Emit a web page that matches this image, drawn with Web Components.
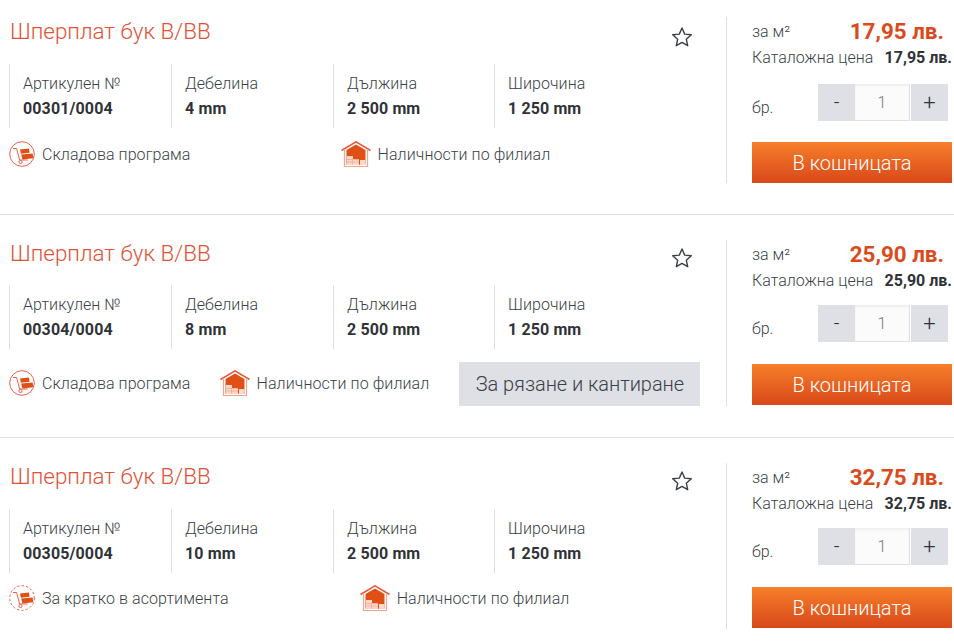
<!DOCTYPE html>
<html lang="bg">
<head>
<meta charset="utf-8">
<title>Шперплат</title>
<style>
html, body { margin: 0; background: #fff; }
body { font-family: Roboto, "Liberation Sans", sans-serif; color: #3a3f47; overflow: hidden; }
</style>
</head>
<body>
<product-list>
  <product-row code="00301/0004" thickness="4 mm" price="17,95 лв." stock="Складова програма" gap="150" first></product-row>
  <product-row code="00304/0004" thickness="8 mm" price="25,90 лв." stock="Складова програма" gap="29" cut></product-row>
  <product-row code="00305/0004" thickness="10 mm" price="32,75 лв." stock="За кратко в асортимента" gap="131" soon></product-row>
</product-list>

<script>
// icons
const cartIcon = (dashed) => `
<svg width="26" height="26" viewBox="0 0 26 26" fill="none">
  <circle cx="13" cy="13" r="12.3" stroke="#e8604a" stroke-width="1" ${dashed ? 'stroke-dasharray="2.4 2"' : ''}/>
  <path d="M4 7.5h3.6l3 11.5h8" stroke="#e8604a" stroke-width="1"/>
  <circle cx="11.5" cy="21" r="1.6" stroke="#e8604a" stroke-width="1"/>
  <path d="M11 8.6l9-1 .5 4.2-8.6 1z" fill="#e04f16"/>
  <path d="M12.2 13.6l11.4-1 .6 4.6-10.8 1.2z" fill="#e04f16"/>
</svg>`;

const houseIcon = `
<svg width="30" height="26" viewBox="0 0 30 26" fill="none">
  <path d="M.5 9.5L15 .8l14.5 8.7" stroke="#e8583a" stroke-width="1.5"/>
  <path d="M3.5 8v17.5h23V8" stroke="#f2a493" stroke-width="1.2"/>
  <path d="M5.5 23.8V9L15 3.4 24.5 9v14.8z" fill="#e04f16"/>
  <path d="M6 15h6v3h6v6H6z" fill="#fbd9c8"/>
  <path d="M6 18.5h12M11.5 18.5V24M6 21h12" stroke="#f2a493" stroke-width=".7"/>
  <path d="M19 19h5.5v5H19z" fill="#fbd9c8"/>
</svg>`;

const starIcon = `
<svg width="22" height="22" viewBox="0 0 22 22" fill="none">
  <path d="M11 2l2.7 6.1 6.6.7-5 4.4 1.4 6.5L11 16.4l-5.7 3.3 1.4-6.5-5-4.4 6.6-.7z" stroke="#3a3f47" stroke-width="1.4" stroke-linejoin="round"/>
</svg>`;

class ProductList extends HTMLElement {
  constructor() {
    super();
    this.attachShadow({ mode: "open" });
    this.shadowRoot.innerHTML = `
    <style>
      :host { display: flex; flex-direction: column; width: 954px; }
      ::slotted(product-row) { border-bottom: 1px solid #dfe0e3; }
      ::slotted(product-row:last-child) { border-bottom: 0; }
    </style>
    <slot></slot>`;
  }
}
customElements.define("product-list", ProductList);

class SpecCell extends HTMLElement {
  constructor() {
    super();
    this.attachShadow({ mode: "open" });
    this.shadowRoot.innerHTML = `
    <style>
      :host { display: block; width: 148px; height: 64px; padding-left: 13px; border-left: 1px solid #dfe0e3; }
      .label { font-size: 16px; font-weight: 300; line-height: 20px; padding-top: 10px; letter-spacing: .08px; color: #3a3f47; }
      .value { font-size: 16px; font-weight: 700; line-height: 20px; margin-top: 5px; letter-spacing: .12px; color: #2f3237; }
    </style>
    <div class="label">${this.getAttribute("label")}</div>
    <div class="value">${this.getAttribute("value")}</div>`;
  }
}
customElements.define("spec-cell", SpecCell);

class QtyBox extends HTMLElement {
  constructor() {
    super();
    this.attachShadow({ mode: "open" });
    this.shadowRoot.innerHTML = `
    <style>
      :host { display: flex; align-items: center; height: 37px; }
      .lbl { width: 66px; font-size: 16px; font-weight: 300; padding-top: 10px; }
      .box { display: flex; width: 130px; height: 37px; }
      .minus, .plus { display: flex; align-items: center; justify-content: center; box-sizing: border-box; width: 37px; height: 37px; background: #dfe0e5; font-size: 22px; font-weight: 300; color: #2f3237; }
      .minus { font-size: 20px; padding-bottom: 2px; }
      .plus { margin-left: 1px; }
      .num { width: 55px; height: 37px; display: flex; align-items: center; justify-content: center; background: #fbfbfb; border-bottom: 1px solid #dfe0e5; border-right: 1px solid #dfe0e5; font-size: 16px; font-weight: 300; color: #77797e; box-shadow: inset 0 2px 2px #eee; box-sizing: border-box; }
    </style>
    <span class="lbl">бр.</span>
    <div class="box"><div class="minus">-</div><div class="num">1</div><div class="plus">+</div></div>`;
  }
}
customElements.define("qty-box", QtyBox);

class ProductRow extends HTMLElement {
  constructor() {
    super();
    this.attachShadow({ mode: "open" });
    const price = this.getAttribute("price");
    const soon = this.hasAttribute("soon");
    const cut = this.hasAttribute("cut");
    this.shadowRoot.innerHTML = `
    <style>
      :host { display: flex; box-sizing: border-box; height: 223px; padding-top: 25px; --head: 45px; --meta-top: 13px; --item-shift: 2px; --qty-top: 14px; --buy-top: 22px; }
      :host([first]) { height: 215px; padding-top: 17px; --head: 47px; --meta-top: 4px; --item-shift: 0px; --qty-top: 16px; --buy-top: 21px; }
      :host([soon]) { --head: 46px; --meta-top: 3px; --item-shift: 0px; }
      .main { width: 727px; height: 166px; padding-left: 9px; border-right: 1px solid #dfe0e3; box-sizing: border-box; display: flex; flex-direction: column; }
      .head { display: flex; justify-content: space-between; height: var(--head); padding-right: 33px; }
      h2 { margin: -1px 0 0 1px; font-size: 22.4px; font-weight: 300; line-height: 28px; color: #df5237; }
      :host([first]) h2 { margin-top: 0; }
      .star { margin-top: 7px; height: 22px; }
      :host([first]) .star { margin-top: 9px; }
      .specs { display: flex; height: 64px; }
      .specs spec-cell:nth-child(3) { width: 147px; }
      .meta { display: flex; align-items: center; margin-top: var(--meta-top); height: 44px; font-size: 16px; font-weight: 300; letter-spacing: .08px; }
      .item { display: flex; align-items: center; gap: 7px; margin-bottom: var(--item-shift); }
      .item svg { display: block; }
      .cut { margin-left: 30px; width: 241px; height: 44px; display: flex; align-items: center; justify-content: center; background: #dfe0e5; font-size: 20px; letter-spacing: -.05px; color: #3a3f47; font-weight: 300; }
      .side { width: 200px; margin-left: 25px; display: flex; flex-direction: column; }
      .line1 { display: flex; justify-content: space-between; align-items: center; height: 28px; padding-right: 8px; }
      .per { font-size: 16px; font-weight: 300; }
      .price { font-size: 22.4px; font-weight: 700; color: #db4a1c; }
      .cat { display: flex; justify-content: space-between; font-size: 16px; font-weight: 300; line-height: 20px; margin-top: 3px; white-space: nowrap; }
      .cat b { font-size: 16px; font-weight: 700; color: #2f3237; }
      qty-box { margin-top: var(--qty-top); }
      .buy { margin-top: var(--buy-top); height: 41px; display: flex; align-items: center; justify-content: center; background: linear-gradient(#f77f2a, #d8481a); color: #fff; font-size: 20px; font-weight: 300; }
    </style>
    <div class="main">
      <div class="head">
        <h2>Шперплат бук B/BB</h2>
        <div class="star">${starIcon}</div>
      </div>
      <div class="specs">
        <spec-cell label="Артикулен №" value="${this.getAttribute("code")}"></spec-cell>
        <spec-cell label="Дебелина" value="${this.getAttribute("thickness")}"></spec-cell>
        <spec-cell label="Дължина" value="2 500 mm"></spec-cell>
        <spec-cell label="Широчина" value="1 250 mm"></spec-cell>
      </div>
      <div class="meta">
        <div class="item">${cartIcon(soon)}<span>${this.getAttribute("stock")}</span></div>
        <div class="item" style="margin-left:${this.getAttribute("gap")}px">${houseIcon}<span>Наличности по филиал</span></div>
        ${cut ? '<div class="cut">За рязане и кантиране</div>' : ''}
      </div>
    </div>
    <div class="side">
      <div class="line1"><span class="per">за м²</span><span class="price">${price}</span></div>
      <div class="cat"><span>Каталожна цена</span><b>${price}</b></div>
      <qty-box></qty-box>
      <div class="buy">В кошницата</div>
    </div>`;
  }
}
customElements.define("product-row", ProductRow);
</script>
</body>
</html>
